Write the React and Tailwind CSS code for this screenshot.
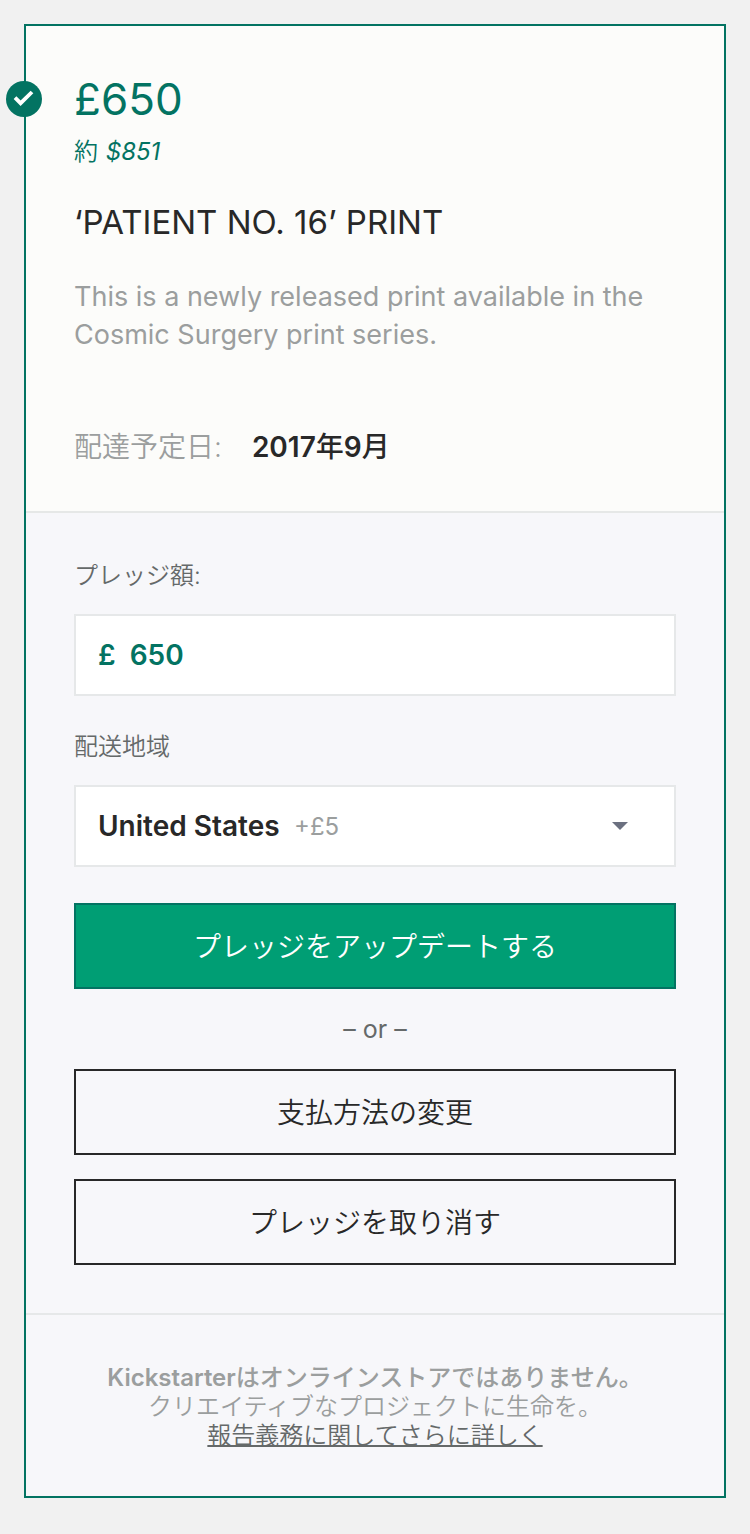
const buttonBase =
  "block h-[86px] w-full cursor-pointer border-2 pt-0.5 text-[28px] font-[350]";

function CheckBadge() {
  return (
    <span className="absolute top-[55px] -left-5 block size-9 rounded-full bg-[#037362]">
      <svg viewBox="0 0 36 36" className="size-9" aria-hidden="true">
        <path d="M9 16.6 L14.6 22.2 L26 11" fill="none" stroke="#fff" strokeWidth="3.8" />
      </svg>
    </span>
  );
}

function Reward() {
  return (
    <section className="border-b-2 border-[#e6e8e7] bg-[#fcfcfa] px-12 pt-12 pb-[45px]">
      <h1 className="text-[44px] leading-[50px] text-[#037362]">£650</h1>
      <p className="mt-2 text-2xl leading-10 text-[#037362]">
        <span className="font-[350]">約</span> <em className="ml-px">$851</em>
      </p>
      <h2 className="mt-[30px] text-[33px] leading-10 text-[#282828]">‘PATIENT NO. 16’ PRINT</h2>
      <p className="mt-9 text-[27px] leading-[38px] text-[#9b9e9e]">
        This is a newly released print available in the Cosmic Surgery print series.
      </p>
      <dl className="mt-[74px] flex gap-[30px] text-[28px] leading-[38px]">
        <dt className="font-[350] text-[#9b9e9e]">配達予定日:</dt>
        <dd className="font-semibold text-[#282828]">
          2017<span className="font-medium">年</span>9<span className="font-medium">月</span>
        </dd>
      </dl>
    </section>
  );
}

function PledgeForm() {
  return (
    <form className="border-b-2 border-[#e6e8e9] px-12 py-12" onSubmit={(e) => e.preventDefault()}>
      <label htmlFor="amount" className="block text-2xl leading-[29px] font-[350] text-[#656969]">
        プレッジ額:
      </label>
      <div className="mt-6 flex h-[82px] items-center gap-[14px] border-2 border-[#e6e8e9] bg-white px-[22px] text-[28px] font-semibold text-[#037362]">
        <span>£</span>
        <input id="amount" type="text" inputMode="numeric" defaultValue="650" className="w-full min-w-0 flex-1 bg-transparent outline-none" />
      </div>

      <label htmlFor="region" className="mt-9 block text-2xl leading-[29px] font-[350] text-[#656969]">
        配送地域
      </label>
      <div className="mt-6 flex h-[82px] items-center border-2 border-[#e6e8e9] bg-white pr-[45px] pl-[22px]">
        <select id="region" className="appearance-none bg-transparent text-[28px] font-semibold text-[#282828] outline-none">
          <option>United States</option>
        </select>
        <span className="ml-[14px] pt-0.5 text-2xl text-[#9b9e9e]">+£5</span>
        <svg viewBox="0 0 18 8" className="ml-auto h-2 w-[18px]" aria-hidden="true">
          <path d="M1 0 H17 L9 8 Z" fill="#6b7080" />
        </svg>
      </div>

      <button type="submit" className={buttonBase + " mt-9 border-[#037362] bg-[#009e74] text-white"}>
        プレッジをアップデートする
      </button>
      <p className="text-center text-[25px] leading-[80px] text-[#656969]">– or –</p>
      <button type="button" className={buttonBase + " border-[#282828] text-[#282828]"}>
        支払方法の変更
      </button>
      <button type="button" className={buttonBase + " mt-6 border-[#282828] text-[#282828]"}>
        プレッジを取り消す
      </button>
    </form>
  );
}

export default function App() {
  return (
    <main
      lang="ja"
      className="min-h-screen bg-[#f1f1f1] p-6 font-['Inter','Noto_Sans_CJK_JP',sans-serif]"
    >
      <article className="relative border-2 border-[#037362] bg-[#f7f7fa]">
        <Reward />
        <CheckBadge />
        <PledgeForm />
        <footer className="px-12 pt-12 pb-[46px] text-center text-2xl leading-[29px] text-[#9b9e9e]">
          <p className="font-medium">
            <span className="font-semibold">Kickstarter</span>はオンラインストアではありません。
          </p>
          <p className="font-[350]">クリエイティブなプロジェクトに生命を。</p>
          <a
            href="#accountability"
            className="block font-[350] text-[#656969] underline decoration-2 [text-decoration-skip-ink:none]"
          >
            報告義務に関してさらに詳しく
          </a>
        </footer>
      </article>
    </main>
  );
}
